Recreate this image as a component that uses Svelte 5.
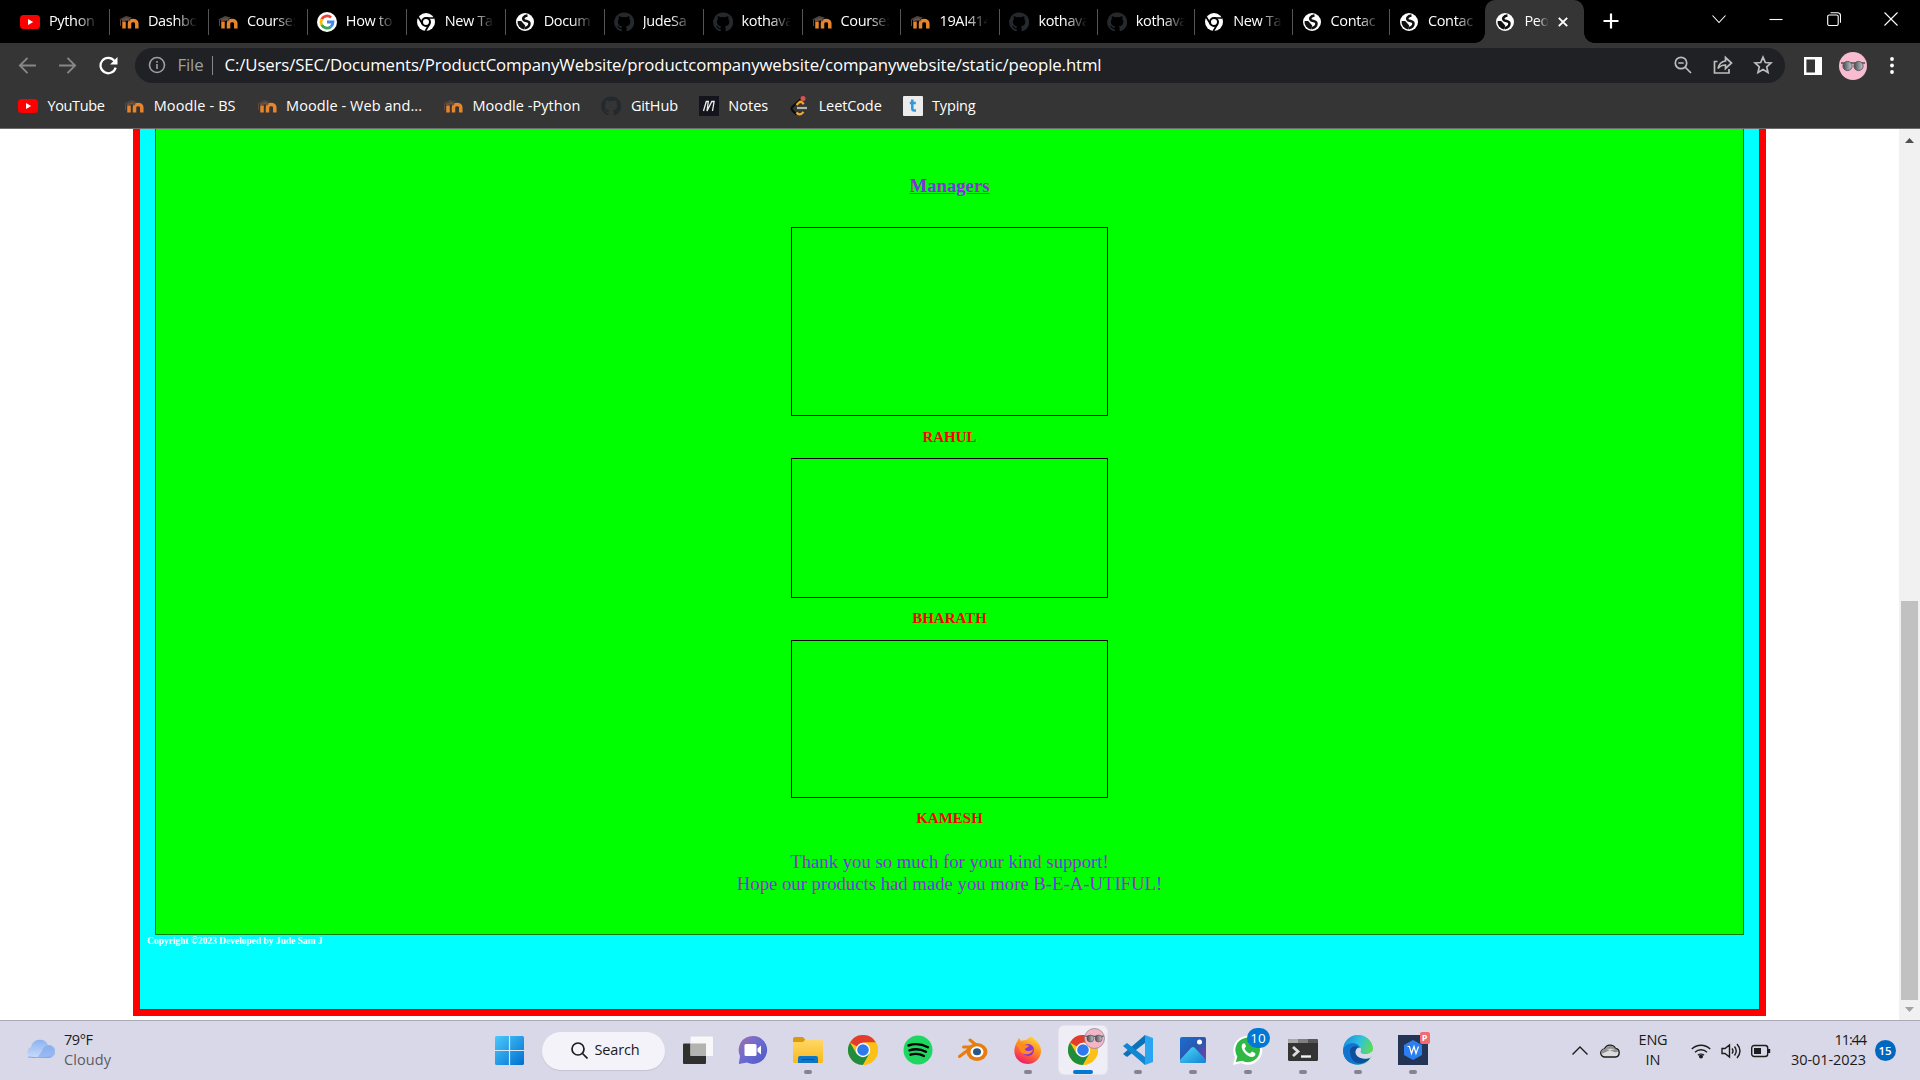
<script>
  const tabs = [
    ['youtube', 'Python'], ['moodle', 'Dashbo'], ['moodle', 'Course:'], ['google', 'How to'],
    ['chromeMono', 'New Ta'], ['globe', 'Docum'], ['github', 'JudeSa'], ['github', 'kothava'],
    ['moodle', 'Course:'], ['moodle', '19AI414'], ['github', 'kothava'], ['github', 'kothava'],
    ['chromeMono', 'New Ta'], ['globe', 'Contac'], ['globe', 'Contac']
  ];
  const bookmarks = [
    ['youtube', 'YouTube', 57], ['moodle', 'Moodle - BS', 82], ['moodle', 'Moodle - Web and...', 136],
    ['moodle', 'Moodle -Python', 108], ['github', 'GitHub', 47], ['notes', 'Notes', 40],
    ['leetcode', 'LeetCode', 63], ['typing', 'Typing', 43.5]
  ];
  const managers = [['RAHUL', 'one'], ['BHARATH', 'two'], ['KAMESH', 'three']];
  const apps = [
    ['taskview', ''], ['chat', ''], ['explorer', 'open'], ['chrome', ''], ['spotify', ''], ['blender', ''],
    ['firefox', 'open'], ['chromeProfile', 'active'], ['vscode', 'open'], ['photos', 'open'],
    ['whatsapp', 'open'], ['terminal', 'open'], ['edge', 'open'], ['wps', 'open']
  ];

  // Tracks a label so that it fills the given width exactly.
  function fit(node, width) {
    const apply = () => {
      node.style.letterSpacing = '0px';
      const natural = node.getBoundingClientRect().width;
      node.style.letterSpacing = (width - natural) / node.textContent.length + 'px';
    };
    apply();
    document.fonts.ready.then(apply);
  }
</script>

{#snippet favicon(name)}
  <svg class="fav" viewBox="0 0 20 20">
    {#if name === 'youtube'}
      <rect y="3" width="20" height="14" rx="3.500" fill="#f00" /><path d="M8 7v6l5.200-3z" fill="#fff" />
    {:else if name === 'moodle'}
      <path d="M0 7.500 7 4l6 1.500-5 3.500-5-1z" fill="#4a4644" /><path d="M1.500 8v6" stroke="#5a4a40" stroke-width="1" />
      <path d="M5 16.500V9.500M10.500 16.500v-5c0-4 7.300-4 7.300 0v5" fill="none" stroke="#e8852b" stroke-width="3.500" />
      <path d="M3 8.800 8.500 7l2.500 2" fill="none" stroke="#7a5035" stroke-width="1.600" />
    {:else if name === 'google'}
      <circle cx="10" cy="10" r="10" fill="#fff" />
      <path d="M4.700 7.200A6 6 0 0 1 14 5.500" fill="none" stroke="#ea4335" stroke-width="2.800" />
      <path d="M4.700 7.200a6 6 0 0 0 0 5.600" fill="none" stroke="#fbbc05" stroke-width="2.800" />
      <path d="M4.700 12.800a6 6 0 0 0 9 2" fill="none" stroke="#34a853" stroke-width="2.800" />
      <path d="M10 10h6a6 6 0 0 1-2.300 4.800" fill="none" stroke="#4285f4" stroke-width="2.800" />
    {:else if name === 'chromeMono'}
      <circle cx="10" cy="10" r="9" fill="#fff" /><circle cx="10" cy="10" r="4" fill="#fff" stroke="#000" stroke-width="2" />
      <path d="M10 6h8M6.500 12 2.200 5M13.500 12 9.400 19" stroke="#000" stroke-width="1.700" />
    {:else if name === 'globe'}
      <circle cx="10" cy="10" r="9" fill="#fff" />
      <path d="M12.500 3.600C8.500 4 7.300 6.800 9 8.200c1.600 1.300 5.800.6 5.500 3.600-.2 2.600-3 3.900-5 4.400" fill="none" stroke="#111" stroke-width="2.500" />
      <path d="M2.600 9h3.600l4 4.500-1 4A7.600 7.600 0 0 1 2.600 9z" fill="#111" />
    {:else if name === 'github'}
      <path fill="#24292e" d="M10 .5A9.600 9.600 0 0 0 7 19.300c.5.100.7-.2.7-.5v-1.900c-2.700.6-3.300-1.100-3.300-1.100-.4-1.100-1.100-1.400-1.100-1.400-.9-.6.1-.6.1-.6 1 .1 1.500 1 1.500 1 .9 1.500 2.300 1.100 2.800.8.1-.6.3-1.100.6-1.300-2.200-.2-4.400-1.100-4.400-4.800 0-1 .4-1.900 1-2.600-.1-.2-.4-1.200.1-2.600 0 0 .8-.3 2.700 1a9 9 0 0 1 4.800 0c1.900-1.300 2.700-1 2.700-1 .5 1.400.2 2.400.1 2.600.6.7 1 1.600 1 2.600 0 3.700-2.200 4.500-4.400 4.700.4.3.7.9.7 1.800v2.800c0 .3.2.6.7.5A9.600 9.600 0 0 0 10 .5z" />
    {:else if name === 'notes'}
      <rect width="20" height="20" fill="#14141c" /><path d="M4.500 15 7.300 5.500h2L8 15l4.800-9.500h2.300L13.500 15" fill="none" stroke="#eee" stroke-width="1.300" />
    {:else if name === 'leetcode'}
      <path d="M12 3 3.200 11c-1 1-1 2.200 0 3.200L7.500 18.500" fill="none" stroke="#0c0c0c" stroke-width="2.200" />
      <path d="m7.500 9 2.500-2.600c1-1 2.200-.8 3.500.4l1.300 1.300M7.500 16.500c2 2.600 4.500 2.600 7-.6" fill="none" stroke="#f5a623" stroke-width="2.200" />
      <path d="M8 12h10" stroke="#b3b3b3" stroke-width="2.200" /><circle cx="14" cy="2.500" r="2.500" fill="#d9534f" />
    {:else}
      <rect width="20" height="20" rx="1" fill="#ececec" /><path d="M9.300 3.500v9q0 2 2 2h1.700M6.800 7h6" fill="none" stroke="#3498db" stroke-width="2.600" />
    {/if}
  </svg>
{/snippet}

{#snippet chromeLogo()}
  <circle cx="15" cy="15" r="15" fill="#fbc116" />
  <path d="M15 15 2 7.500A15 15 0 0 1 28 7.500H15z" fill="#e33b2e" />
  <path d="M2 7.500A15 15 0 0 0 15 30l6.500-11.200L15 15 8.500 18.700z" fill="#1e8e3e" />
  <path d="M28 7.500H15a7.500 7.500 0 0 1 6.500 11.300L15 30A15 15 0 0 0 28 7.500z" fill="#fbc116" />
  <circle cx="15" cy="15" r="7.200" fill="#fff" /><circle cx="15" cy="15" r="5.800" fill="#2f79ee" />
{/snippet}

{#snippet appIcon(name)}
  <svg class="app-icon" viewBox="0 0 30 30">
    {#if name === 'taskview'}
      <rect y="8.500" width="23" height="20.500" rx="1" fill="#30302f" /><rect x="7.500" y="1.500" width="22.500" height="19.500" rx="1" fill="#fafafa" opacity=".95" /><path d="M7.500 8.500H23V21H7.500z" fill="#b3b3b1" />
    {:else if name === 'chat'}
      <path d="M15 1a14 14 0 1 1-6 26.600L.8 29 2 21A14 14 0 0 1 15 1z" fill="url(#chatG)" />
      <rect x="6.500" y="9" width="12" height="12" rx="1.500" fill="#fff" /><path d="m19.500 13.500 3.500-3v9l-3.500-3z" fill="#fff" />
    {:else if name === 'explorer'}
      <path d="M0 4q0-2 2-2h8l2.500 3H28v6H0z" fill="#dc9a06" /><rect y="5" width="30" height="23" rx="1.500" fill="url(#folderG)" />
      <path d="M0 7V5h12l-2 2z" fill="#dc9a06" /><path d="M5 28v-5q0-2 2-2h16q2 0 2 2v5z" fill="#0f76c6" /><path d="M9 24.500h12" stroke="#07518f" />
    {:else if name === 'chrome' || name === 'chromeProfile'}
      {@render chromeLogo()}
    {:else if name === 'spotify'}
      <circle cx="15" cy="15" r="14.500" fill="#1ed760" /><path d="M5.500 10.500Q15 7 25 12.200M6.500 15.300Q15 12.500 23 16.700M7.500 19.700Q14.500 17.500 21 21" fill="none" stroke="#000" stroke-width="2.400" stroke-linecap="round" />
    {:else if name === 'blender'}
      <path d="M1.500 21.500 14 12H5.500M12 5l10 8" fill="none" stroke="#e87d0d" stroke-width="3" stroke-linecap="round" stroke-linejoin="round" />
      <ellipse cx="19" cy="17" rx="10.500" ry="9" fill="#e87d0d" /><ellipse cx="19" cy="16.800" rx="6.500" ry="5.500" fill="#fff" /><ellipse cx="19" cy="16.800" rx="4" ry="3.500" fill="#265787" />
    {:else if name === 'firefox'}
      <path d="M4 7c1-2 1-3 2-4l2 3c2-1 4-1 5-1 2-1 3-3 6-4 1 3 5 4 7 8 6 10-2 20-11 20C5 29-3 19 4 7z" fill="url(#foxG)" />
      <circle cx="15" cy="15" r="6" fill="#8a35d8" /><path d="M3 9c3-1 7 0 9 1l4 .5c0 2-4 2-4 4 2 3 6 1 8 0-1 6-12 7-14-1z" fill="#ff8b1c" />
    {:else if name === 'vscode'}
      <path d="m22 0 8 3v24l-8 3z" fill="#2aa5f1" /><path d="M22 0v8L4 22l-4-3z" fill="#0b72b8" /><path d="M22 22 4 8l-4 3 22 19z" fill="#1186d2" />
    {:else if name === 'photos'}
      <rect x="2" y="2" width="26" height="26" rx="2" fill="url(#photoG)" /><path d="m2 25 11-12q2-2 4 0l11 12v1q0 2-2 2H4q-2 0-2-2z" fill="url(#hillG)" /><circle cx="21.500" cy="7" r="2.500" fill="#fff" />
    {:else if name === 'whatsapp'}
      <path d="m0 30 2-8A14.500 14.500 0 1 1 8 28z" fill="#fff" /><path d="m2.800 27 1.500-5.500A12.300 12.300 0 1 1 9 25.800z" fill="#2fb944" />
      <path d="M10 8.500c-4 3 2 13 9 13.500 3 0 4-3 3-4l-3-1.500-2 2c-3-1-4.500-2.500-5.500-5l1.500-2-1-3z" fill="#fff" />
    {:else if name === 'terminal'}
      <rect y="4" width="30" height="22" rx="1.500" fill="#343434" /><path d="M0 8V5.500Q0 4 1.500 4H10v4z" fill="#a9a9a9" /><path d="M10 4h10v4H10z" fill="#7f7f7f" /><path d="M20 4h8.500Q30 4 30 5.500V8H20z" fill="#575757" />
      <path d="m5 12 5 4.500L5 21" fill="none" stroke="#ddd" stroke-width="2.800" /><path d="M13 21.500h10" stroke="#f2f2f2" stroke-width="2.400" />
    {:else if name === 'edge'}
      <circle cx="15" cy="15" r="15" fill="url(#edgeG)" /><path d="M0 15c2-8 15-9 17-2-3-1-5 1-5 4 0 6 7 9 15 6-6 10-27 9-27-8z" fill="#1374cf" /><path d="M7 16c0-3 4-6 8-4-4 3-4 14 12 11-4 7-20 9-20-7z" fill="#0c4f9e" />
      <path d="M17.500 13c1.500 1.500-.5 3.500.5 5 2 2 10 1.500 12-3v5l-3 3c-8 2-14-1-14.500-5.500-.2-3 2-5.500 5-4.500z" fill="#dad9e9" /><path d="M17 8.500c5 2 1 7 2 8.500 4 2 10 0 11-3C29-2 7-5 1 10c4-5 12-5 16-1.500z" fill="url(#edgeG)" />
    {:else}
      <path d="M0 0h30v30H0z" fill="#243455" /><path d="m15 5 9 5v10l-9 5-9-5V10z" fill="#2d7ff0" /><path d="M9.500 11.500h2l2 7 2.500-7 2 7 2.500-7" fill="none" stroke="#fff" stroke-width="1.200" />
    {/if}
  </svg>
{/snippet}

{#snippet glasses()}
  <path d="M2 11h24" stroke="#444" stroke-width="1.400" />
  <circle cx="8.500" cy="14" r="4.600" fill="url(#lensG)" stroke="#555" stroke-width=".9" /><circle cx="19.500" cy="14" r="4.600" fill="url(#lensG)" stroke="#555" stroke-width=".9" />
{/snippet}

<svg class="defs" aria-hidden="true">
  <defs>
    <linearGradient id="chatG" x1="0" y1="0" x2="1" y2=".9"><stop stop-color="#a070a8" /><stop offset=".5" stop-color="#6c6bd0" /><stop offset="1" stop-color="#5059c9" /></linearGradient>
    <linearGradient id="folderG" x1="0" y1="0" x2="0" y2="1"><stop stop-color="#ffd765" /><stop offset="1" stop-color="#f8b91c" /></linearGradient>
    <linearGradient id="foxG" x1=".8" y1="0" x2=".3" y2="1"><stop stop-color="#ffe43c" /><stop offset=".45" stop-color="#ff8a22" /><stop offset="1" stop-color="#f4146d" /></linearGradient>
    <linearGradient id="photoG" x1="0" y1="0" x2="1" y2="1"><stop stop-color="#1670d2" /><stop offset=".5" stop-color="#2b57ae" /><stop offset="1" stop-color="#8a3aa6" /></linearGradient>
    <linearGradient id="hillG" x1="0" y1="0" x2="1" y2="1"><stop stop-color="#4ddcf5" /><stop offset="1" stop-color="#1381d8" /></linearGradient>
    <linearGradient id="edgeG" x1="0" y1=".3" x2="1" y2=".6"><stop stop-color="#1b8fdf" /><stop offset=".5" stop-color="#2fc2df" /><stop offset="1" stop-color="#5ddb55" /></linearGradient>
    <linearGradient id="lensG"><stop stop-color="#45494d" /><stop offset="1" stop-color="#c0cbd0" /></linearGradient>
    <linearGradient id="winG" x1="0" y1="0" x2="1" y2="1"><stop stop-color="#4cc9fb" /><stop offset="1" stop-color="#006fd0" /></linearGradient>
    <linearGradient id="cloudG" x1="0" y1="0" x2="0" y2="1"><stop stop-color="#8db2f0" /><stop offset="1" stop-color="#c9dcfa" /></linearGradient>
  </defs>
</svg>

<div class="screen">
  <header class="tabstrip">
    {#each tabs as [icon, title], i}
      <div class="tab" class:narrow={i > 9} class:last={i === 14}>{@render favicon(icon)}<span class="title">{title}</span></div>
    {/each}
    <div class="tab current">
      {@render favicon('globe')}<span class="title">Peo</span>
      <svg class="close" viewBox="0 0 10 10"><path d="m.8.8 8.400 8.400M9.200.8.8 9.200" stroke="#fff" stroke-width="1.900" /></svg>
    </div>
    <svg class="plus" viewBox="0 0 16 16"><path d="M8 .5v15M.5 8h15" stroke="#fff" stroke-width="2.200" /></svg>
    <div class="winctl">
      <svg viewBox="0 0 14 14"><path d="m.5 3.500 6.500 7 6.500-7" /></svg>
      <svg viewBox="0 0 14 14"><path d="M.5 7.500h13" /></svg>
      <svg viewBox="0 0 14 14"><rect x=".7" y="3" width="10.500" height="10.500" rx="1.500" /><path d="M3.500.7h7q3 0 3 3v7" /></svg>
      <svg viewBox="0 0 14 14"><path d="m.5.5 13 13m0-13-13 13" /></svg>
    </div>
  </header>

  <div class="toolbar">
    <svg class="nav dim" viewBox="0 0 18 18"><path d="M17 9H2M9 1.800 1.800 9 9 16.200" /></svg>
    <svg class="nav dim" viewBox="0 0 18 18"><path d="M1 9h15M9 1.800 16.200 9 9 16.200" /></svg>
    <svg class="nav" viewBox="0 0 18 18"><path d="M15.800 11A7.300 7.300 0 1 1 14.500 4.500" /><path class="fill" d="M17.500 1v7h-7z" /></svg>
    <div class="omnibox">
      <svg class="info" viewBox="0 0 18 18"><circle cx="9" cy="9" r="7.500" /><path d="M9 8v5M9 5v1.700" /></svg>
      <span class="file" use:fit={26}>File</span><i class="pipe"></i>
      <span class="url" use:fit={877}>C:/Users/SEC/Documents/ProductCompanyWebsite/productcompanywebsite/companywebsite/static/people.html</span>
      <div class="actions">
        <svg viewBox="0 0 20 20"><circle cx="8" cy="8" r="5.700" /><path d="m12 12 6 6M5.300 8h5.400" /></svg>
        <svg viewBox="0 0 20 20"><path d="M4.500 6.500H1.500V18H16v-4" /><path d="M5 13.500C6 8.500 8.500 6.500 12.500 6V2.500l6 5.500-6 5.500V10C9 10 7 11 5 13.500z" /></svg>
        <svg viewBox="0 0 20 20"><path d="m10 2.200 2.300 5.300 5.700.5-4.300 3.800 1.300 5.600-5-3-5 3 1.300-5.600L2 8l5.700-.5z" /></svg>
      </div>
    </div>
    <svg class="panel" viewBox="0 0 18 18"><path d="M1.200 1.200h15.600v15.600H1.200z" fill="none" stroke="#fff" stroke-width="2.400" /><path d="M11 1h6v16h-6z" fill="#fff" /></svg>
    <svg class="avatar" viewBox="0 0 28 28"><circle cx="14" cy="14" r="14" fill="#f8bbd0" />{@render glasses()}</svg>
    <svg class="kebab" viewBox="0 0 4 18"><circle cx="2" cy="2.500" r="1.900" /><circle cx="2" cy="9" r="1.900" /><circle cx="2" cy="15.500" r="1.900" /></svg>
  </div>

  <nav class="bookmarks">
    {#each bookmarks as [icon, label, width]}
      <div class="bookmark">{@render favicon(icon)}<span use:fit={width}>{label}</span></div>
    {/each}
  </nav>

  <main class="viewport">
    <div class="frame">
      <section class="people">
        <h3>Managers</h3>
        {#each managers as [name, size]}
          <div class="photo {size}"></div>
          <div class="name {size}">{name}</div>
        {/each}
        <p class="thanks">Thank you so much for your kind support!<br />Hope our products had made you more B-E-A-UTIFUL!</p>
      </section>
      <footer>Copyright ©2023 Developed by Jude Sam J</footer>
    </div>
    <div class="scrollbar">
      <svg class="up" viewBox="0 0 9 5"><path d="M0 5 4.500 0 9 5z" fill="#505050" /></svg>
      <div class="thumb"></div>
      <svg class="down" viewBox="0 0 9 5"><path d="M0 0l4.500 5L9 0z" fill="#a3a3a3" /></svg>
    </div>
  </main>

  <div class="taskbar">
    <div class="weather">
      <svg viewBox="0 0 30 19"><path d="M6 19a6 6 0 0 1 0-11 9 9 0 0 1 17-2 6.600 6.600 0 0 1 1 13z" fill="url(#cloudG)" /><path d="M17 12q1-5 7-6a6.500 6.500 0 0 1 0 13H12z" fill="#7ba4ec" opacity=".6" /><path d="M3 18q12 2 23 0" stroke="#7da6ee" fill="none" /></svg>
      <div class="lines left"><span use:fit={28.5}>79°F</span><span class="muted" use:fit={47}>Cloudy</span></div>
    </div>
    <svg class="start" viewBox="0 0 29 29"><rect width="29" height="29" rx="1.500" fill="url(#winG)" /><path d="M14.500 0v29M0 14.500h29" stroke="#d9e6f5" stroke-width="1.200" /></svg>
    <div class="search">
      <svg viewBox="0 0 17 17"><circle cx="7" cy="7" r="6" /><path d="m11.500 11.500 5 5" /></svg>
      <span use:fit={45}>Search</span>
    </div>
    <div class="apps">
      {#each apps as [icon, state]}
        <div class="app {state}">
          {@render appIcon(icon)}
          {#if icon === 'chromeProfile'}<svg class="mini" viewBox="0 0 28 28"><circle cx="14" cy="14" r="13.300" fill="#f3b5c9" stroke="#8e8088" />{@render glasses()}</svg>{/if}
          {#if icon === 'whatsapp'}<b class="count">10</b>{/if}
          {#if icon === 'wps'}<b class="pdf">P</b>{/if}
        </div>
      {/each}
    </div>
    <div class="tray">
      <svg class="chev" viewBox="0 0 16 9"><path d="m.5 8.500 7.500-7.500 7.500 7.500" /></svg>
      <svg class="onedrive" viewBox="0 0 20 14"><path d="M5 13a4 4 0 0 1-.5-8 6 6 0 0 1 11-.5A4.300 4.300 0 0 1 15.500 13z" fill="#ddd" /><path d="M1.500 10 10 6l-5-1.200A4 4 0 0 0 1 9zM5 5a6 6 0 0 1 10.500 0l-5.500 1.500 6 2 2.500-1.500-3-2.500z" fill="#8f8f8f" stroke="none" /></svg>
      <div class="lines lang"><span use:fit={29}>ENG</span><span>IN</span></div>
      <svg class="wifi" viewBox="0 0 20 16"><path d="M.8 6a13 13 0 0 1 18.400 0M4 9.300a8.500 8.500 0 0 1 12 0M7 12.300a4.300 4.300 0 0 1 6 0" /><circle cx="10" cy="13.500" r="1.300" fill="#1c1c1c" /></svg>
      <svg class="sound" viewBox="0 0 20 16"><path d="M1 5.500v5h3L8.500 14V2L4 5.500zM11 5.500q2 2.500 0 5M13.500 3.500q3.500 4.500 0 9M16 1q6 7 0 14" /></svg>
      <svg class="battery" viewBox="0 0 20 14"><rect x=".7" y="1.500" width="16" height="11" rx="2.500" /><path d="M3 4h7v6H3z" fill="#1c1c1c" stroke="none" /><path d="M18 5v4" stroke-width="2.400" /></svg>
      <div class="lines clock"><span use:fit={31.5}>11:44</span><span use:fit={75}>30-01-2023</span></div>
      <b class="badge">15</b>
    </div>
  </div>
</div>

<style>
  :global(body) { margin: 0; overflow: hidden; background: #fff; }
  * { box-sizing: border-box; }
  svg { display: block; flex: none; }
  .defs { position: absolute; width: 0; height: 0; }
  .screen { width: 1920px; height: 1080px; display: flex; flex-direction: column; overflow: hidden; font: 14.500px/20px "Open Sans", "Noto Sans", sans-serif; color: #fff; }
  .screen span { white-space: nowrap; flex: none; }

  .tabstrip { height: 43px; flex: none; background: #000; display: flex; padding-left: 11px; }
  .tab { width: 98.950px; height: 43px; flex: none; display: flex; align-items: center; padding-left: 9px; gap: 9px; background: linear-gradient(#555, #555) right top 9px / 1px 26px no-repeat; }
  .tab.narrow { width: 97.400px; }
  .tab.last { background: none; width: 95.500px; }
  .fav { width: 20px; height: 20px; }
  .title { width: 50px; padding-bottom: 1px; letter-spacing: -.35px; -webkit-mask-image: linear-gradient(90deg, #000 55%, transparent 98%); mask-image: linear-gradient(90deg, #000 55%, transparent 98%); }
  .tab.current { position: relative; background: #353535; width: 99px; border-radius: 10px 10px 0 0; padding-left: 10px; }
  .tab.current::before, .tab.current::after { content: ""; position: absolute; bottom: 0; width: 10px; height: 10px; }
  .tab.current::before { left: -10px; background: radial-gradient(circle at 0 0, transparent 9.500px, #353535 10px); }
  .tab.current::after { right: -10px; background: radial-gradient(circle at 100% 0, transparent 9.500px, #353535 10px); }
  .current .title { width: 25px; }
  .close { width: 10px; height: 10px; }
  .plus { width: 16px; height: 16px; margin: 13px 0 0 19px; }
  .winctl { margin-left: auto; display: flex; gap: 43.500px; padding: 11.500px 22px 0 0; }
  .winctl svg { width: 14px; height: 14px; fill: none; stroke: #fff; stroke-width: 1.100; }

  .toolbar { height: 45px; flex: none; background: #353535; display: flex; align-items: center; padding: 0 26px 0 17.500px; }
  .nav { width: 19px; height: 19px; margin-right: 21.500px; fill: none; stroke: #fff; stroke-width: 2.100; }
  .nav.dim { stroke: #878787; stroke-width: 1.800; }
  .nav .fill { fill: #fff; stroke: none; }
  .omnibox { width: 1650px; height: 35px; border-radius: 18px; background: #202124; display: flex; align-items: center; margin-left: -4px; padding: 0 12px 1px 13px; }
  .info { width: 18px; height: 18px; fill: none; stroke: #9aa0a6; stroke-width: 1.600; }
  .file { margin-left: 11.500px; color: #9aa0a6; font-size: 16.800px; }
  .pipe { width: 1.500px; height: 19px; background: #85888c; margin: 0 11.500px 0 8px; }
  .url { font-size: 16.800px; }
  .actions { margin-left: auto; display: flex; gap: 20px; }
  .actions svg { width: 20px; height: 20px; fill: none; stroke: #bdbdbd; stroke-width: 1.700; }
  .panel { width: 18px; height: 18px; margin-left: 19px; }
  .avatar { width: 28px; height: 28px; margin-left: 17px; }
  .kebab { width: 4px; height: 19px; margin-left: auto; fill: #fff; }

  .bookmarks { height: 41px; flex: none; background: #353535; border-bottom: 1px solid #6c6c6c; display: flex; padding: 8px 0 0 18px; gap: 20.600px; align-items: flex-start; }
  .bookmark { display: flex; gap: 9.500px; margin-right: -.1px; }
  .bookmark + .bookmark { margin-left: .4px; }
  .bookmark:nth-child(2) { margin-left: -.8px; }

  .viewport { height: 891px; flex: none; background: #fff; display: flex; font-family: "Liberation Serif", serif; }
  .frame { width: 1633px; height: 887px; margin-left: 133px; border: 7px solid #f00; border-top: 0; background: #0ff; padding: 0 15px; }
  .people { height: 806px; background: #0f0; border: 1px solid #008000; border-top: 0; display: flex; flex-direction: column; align-items: center; padding-top: 46px; }
  h3 { margin: 0 0 30px; font-size: 18.720px; line-height: 22px; color: #8a2be2; text-decoration: underline; }
  .photo { width: 317px; border: 1px solid #000; }
  .photo.one { height: 189px; }
  .photo.two { height: 140px; }
  .photo.three { height: 158px; }
  .name { margin: 12px 0 13px; color: #f00; font-weight: 700; font-size: 15px; line-height: 17px; }
  .name.one { margin: 13px 0 12px; }
  .name.three { margin-bottom: 24px; }
  .thanks { margin: 0; color: #8a2be2; font-size: 18.720px; line-height: 22px; text-align: center; }
  footer { margin: 1px 0 0 -8px; font-size: 9.450px; line-height: 11px; font-weight: 700; }
  .scrollbar { width: 21px; height: 891px; margin-left: auto; background: #f1f1f1; display: flex; flex-direction: column; align-items: center; }
  .up { width: 9px; height: 5px; margin-top: 9px; }
  .thumb { width: 17px; height: 399px; background: #c1c1c1; margin-top: 458px; }
  .down { width: 9px; height: 5px; margin-top: 7px; }

  .taskbar { height: 60px; flex: none; background: #d9d8e8; border-top: 1px solid #aaaab4; display: flex; align-items: center; color: #1a1a1a; padding-left: 25px; }
  .weather { width: 470px; display: flex; gap: 9px; align-items: center; }
  .weather > svg { width: 30px; height: 19px; margin-top: -4px; }
  .lines { display: flex; flex-direction: column; align-items: center; padding-bottom: 2px; }
  .lines.left { align-items: flex-start; }
  .muted { color: #5c5b63; }
  .start { width: 29px; height: 29px; }
  .search { width: 123px; height: 38px; border-radius: 19px; margin: 0 8.500px 0 18px; background: #f4f3fa; box-shadow: 0 1px 1px #c5c4d2; display: flex; align-items: center; padding: 0 0 1px 29px; gap: 6.500px; }
  .search svg { width: 17px; height: 17px; fill: none; stroke: #1c1c1c; stroke-width: 1.700; }
  .apps { display: flex; gap: 7px; }
  .app { position: relative; width: 48px; height: 48px; margin-bottom: 2px; display: grid; place-items: center; border-radius: 5px; }
  .app-icon { width: 30px; height: 30px; }
  .app.active { background: #efeef7; box-shadow: 0 0 0 1px #e4e3ef; }
  .app.open::after, .app.active::after { content: ""; position: absolute; left: 20px; bottom: 0; width: 8px; height: 4px; border-radius: 2px; background: #85848e; }
  .app.active::after { left: 14px; width: 20px; background: #0078d4; }
  .mini { position: absolute; right: 2px; top: 2px; width: 21px; height: 21px; }
  .count { position: absolute; left: 23px; top: 2px; width: 23px; height: 20px; border-radius: 10px; background: #0078d4; color: #fff; font-weight: 400; text-align: center; line-height: 20px; font-size: 13.500px; }
  .pdf { position: absolute; left: 31px; top: 6px; width: 10px; height: 12px; border-radius: 2px; background: #f26a72; color: #fff; font-size: 9px; line-height: 12px; text-align: center; }
  .tray { margin-left: auto; display: flex; align-items: center; padding-right: 24.500px; }
  .tray svg { fill: none; stroke: #1c1c1c; stroke-width: 1.400; }
  .chev { width: 16px; height: 9px; }
  .onedrive { width: 20px; height: 14px; margin-left: 12px; }
  .lang { margin-left: 19px; }
  .wifi { width: 20px; height: 16px; margin-left: 23px; }
  .sound { width: 20px; height: 16px; margin-left: 10px; }
  .battery { width: 20px; height: 14px; margin-left: 10px; }
  .clock { margin-left: 20.500px; align-items: flex-end; }
  .badge { width: 21px; height: 21px; border-radius: 50%; margin-left: 8.500px; background: #0067c0; color: #fff; font: 600 11.500px/21px "Open Sans", sans-serif; text-align: center; }
</style>
